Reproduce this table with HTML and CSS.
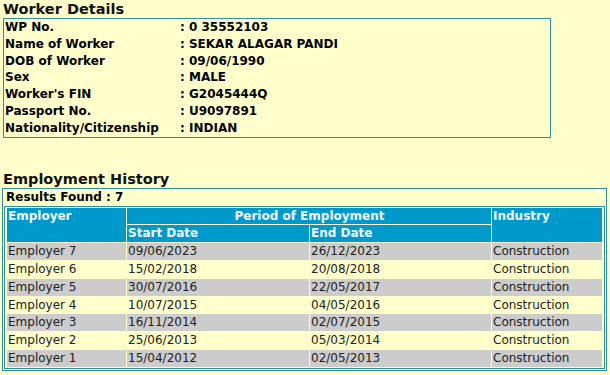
FILE: index.html
```html
<!DOCTYPE html>
<html>
<head>
<meta charset="utf-8">
<link rel="stylesheet" href="styles.css">
</head>
<body>
<div class="page">
  <h2 class="section-title">Worker Details</h2>
  <table class="details">
    <tr><th>WP No.</th><td>: 0 35552103</td></tr>
    <tr><th>Name of Worker</th><td>: SEKAR ALAGAR PANDI</td></tr>
    <tr><th>DOB of Worker</th><td>: 09/06/1990</td></tr>
    <tr><th>Sex</th><td>: MALE</td></tr>
    <tr><th>Worker's FIN</th><td>: G2045444Q</td></tr>
    <tr><th>Passport No.</th><td>: U9097891</td></tr>
    <tr><th>Nationality/Citizenship</th><td>: INDIAN</td></tr>
  </table>

  <h2 class="section-title history-title">Employment History</h2>
  <div class="history">
    <div class="results">Results Found : 7</div>
    <div class="history-inner">
      <table class="emp">
        <colgroup>
          <col class="c-emp"><col class="c-start"><col class="c-end"><col class="c-ind">
        </colgroup>
        <thead>
          <tr><th rowspan="2">Employer</th><th colspan="2" class="center">Period of Employment</th><th rowspan="2">Industry</th></tr>
          <tr><th>Start Date</th><th>End Date</th></tr>
        </thead>
        <tbody>
          <tr class="odd"><td>Employer 7</td><td>09/06/2023</td><td>26/12/2023</td><td>Construction</td></tr>
          <tr><td>Employer 6</td><td>15/02/2018</td><td>20/08/2018</td><td>Construction</td></tr>
          <tr class="odd"><td>Employer 5</td><td>30/07/2016</td><td>22/05/2017</td><td>Construction</td></tr>
          <tr><td>Employer 4</td><td>10/07/2015</td><td>04/05/2016</td><td>Construction</td></tr>
          <tr class="odd"><td>Employer 3</td><td>16/11/2014</td><td>02/07/2015</td><td>Construction</td></tr>
          <tr><td>Employer 2</td><td>25/06/2013</td><td>05/03/2014</td><td>Construction</td></tr>
          <tr class="odd"><td>Employer 1</td><td>15/04/2012</td><td>02/05/2013</td><td>Construction</td></tr>
        </tbody>
      </table>
    </div>
  </div>
</div>
</body>
</html>
```

FILE: styles.css
```css
html, body {
  margin: 0;
  padding: 0;
  background: #ffffcc;
}
body {
  font-family: "DejaVu Sans", Verdana, sans-serif;
  font-size: 12px;
  color: #000;
}
.page {
  padding: 0 3px 0 2px;
}
.section-title {
  margin: 0;
  padding-left: 1px;
  font-size: 14.5px;
  font-weight: bold;
  line-height: 18px;
  color: #111;
}
.details {
  width: 548px;
  margin-left: 1px;
  border: 1px solid #2f8f9d;
  border-collapse: collapse;
}
.details th,
.details td {
  padding: 0 0 0 1px;
  line-height: 16.8px;
  text-align: left;
  font-weight: bold;
  white-space: nowrap;
}
.details th {
  width: 174px;
}
.history-title {
  margin-top: 32px;
}
.history {
  border: 1px solid #2f8f9d;
  padding: 1px;
}
.results {
  font-weight: bold;
  line-height: 16px;
  padding-left: 2px;
  margin-bottom: 1px;
  margin-top: -1px;
}
.history-inner {
  border: 1px solid #2f8f9d;
  padding: 1px;
}
.emp {
  width: 100%;
  table-layout: fixed;
  border-collapse: separate;
  border-spacing: 1px;
  margin: -1px 0;
}
.c-emp { width: 119px; }
.c-start { width: 182px; }
.c-end { width: 181px; }
.c-ind { width: auto; }
.emp th,
.emp td {
  padding: 0 0 0 1px;
  line-height: 16.8px;
  text-align: left;
  vertical-align: top;
  white-space: nowrap;
  overflow: hidden;
}
.emp th {
  background: #0099cc;
  color: #f4fbff;
  font-weight: bold;
}
.emp th.center {
  text-align: center;
}
.emp td {
  background: #ffffcc;
  color: #222;
}
.emp tr.odd td {
  background: #cccccc;
}
```
